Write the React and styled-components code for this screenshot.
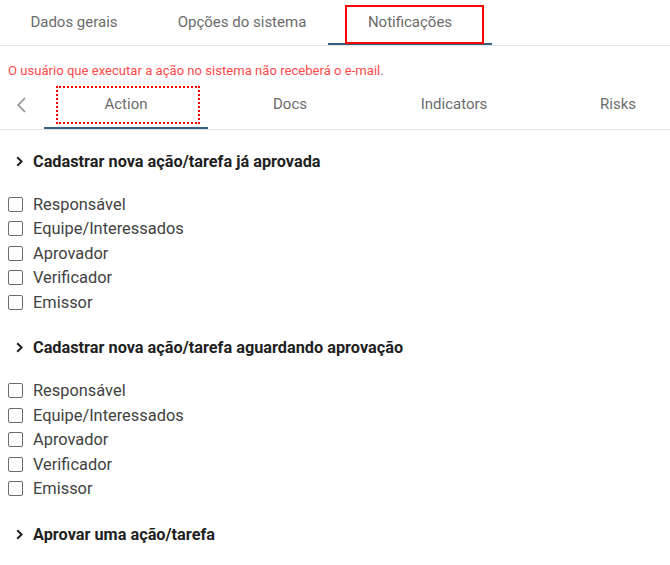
import React from "react";
import styled, { createGlobalStyle } from "styled-components";

const GlobalStyle = createGlobalStyle`
  html, body {
    margin: 0;
    padding: 0;
    background: #fff;
  }
  body {
    font-family: Roboto, "Liberation Sans", Arial, sans-serif;
  }
`;

const Page = styled.div`
  width: 670px;
  height: 565px;
  overflow: hidden;
  background: #fff;
`;

const TopBar = styled.div`
  display: flex;
  gap: 4px;
  margin-left: -8px;
  border-bottom: 1px solid #e3e3e3;
`;

const TopTab = styled.div`
  position: relative;
  width: 164px;
  height: 43px;
  flex-shrink: 0;
  display: flex;
  align-items: center;
  justify-content: center;
  font-size: 15px;
  color: #6b6b6b;
  border-bottom: 2px solid ${(p) => (p.$active ? "#35607f" : "transparent")};
`;

const RedBox = styled.div`
  position: absolute;
  top: 5px;
  left: 17px;
  width: 135px;
  height: 35px;
  border: 2px solid #f00;
`;

const Warning = styled.div`
  padding: 17px 8px 0;
  font-size: 13.1px;
  line-height: 16px;
  color: #ff4a4a;
`;

const SubBar = styled.div`
  display: flex;
  margin-top: 2px;
  border-bottom: 1px solid #e3e3e3;
`;

const Arrow = styled.div`
  width: 44px;
  flex-shrink: 0;
  display: flex;
  align-items: center;
  justify-content: center;
  padding-right: 2px;
  box-sizing: border-box;
`;

const SubTab = styled.div`
  position: relative;
  width: 164px;
  height: 46px;
  flex-shrink: 0;
  display: flex;
  align-items: center;
  justify-content: center;
  font-size: 15px;
  color: #6b6b6b;
  border-bottom: 2px solid ${(p) => (p.$active ? "#35607f" : "transparent")};
`;

const DottedBox = styled.div`
  position: absolute;
  top: 5px;
  left: 12px;
  width: 140px;
  height: 34px;
  border: 2px dotted #f00;
`;

const Content = styled.div`
  padding: 21px 0 0 8px;
`;

const Section = styled.div`
  margin-bottom: 23px;
`;

const Heading = styled.div`
  display: flex;
  align-items: center;
  gap: 10px;
  height: 20px;
  padding-left: 8px;
  font-size: 16.3px;
  font-weight: 700;
  color: #1f1f1f;
`;

const List = styled.div`
  margin-top: 21px;
  display: flex;
  flex-direction: column;
`;

const Row = styled.label`
  display: flex;
  align-items: center;
  gap: 10px;
  height: 24.5px;
  font-size: 16.4px;
  color: #424242;
`;

const Box = styled.span`
  box-sizing: border-box;
  width: 15px;
  height: 15px;
  border: 1.5px solid #6a6a6a;
  border-radius: 2px;
  flex-shrink: 0;
`;

const Chevron = ({ dir = "right" }) =>
  dir === "right" ? (
    <svg width="7" height="11" viewBox="0 0 7 11">
      <path d="M1.2 1.2 L5.6 5.5 L1.2 9.8" fill="none" stroke="#1f1f1f" strokeWidth="2" />
    </svg>
  ) : (
    <svg width="9" height="16" viewBox="0 0 9 16">
      <path d="M8 1 L1.2 8 L8 15" fill="none" stroke="#8a8a8a" strokeWidth="1.5" />
    </svg>
  );

const roles = ["Responsável", "Equipe/Interessados", "Aprovador", "Verificador", "Emissor"];

const sections = [
  { title: "Cadastrar nova ação/tarefa já aprovada", open: true },
  { title: "Cadastrar nova ação/tarefa aguardando aprovação", open: true },
  { title: "Aprovar uma ação/tarefa", open: false },
];

export default function App() {
  return (
    <Page>
      <GlobalStyle />
      <TopBar>
        <TopTab>Dados gerais</TopTab>
        <TopTab>Opções do sistema</TopTab>
        <TopTab $active>
          Notificações
          <RedBox />
        </TopTab>
      </TopBar>

      <Warning>O usuário que executar a ação no sistema não receberá o e-mail.</Warning>

      <SubBar>
        <Arrow>
          <Chevron dir="left" />
        </Arrow>
        <SubTab $active>
          Action
          <DottedBox />
        </SubTab>
        <SubTab>Docs</SubTab>
        <SubTab>Indicators</SubTab>
        <SubTab>Risks</SubTab>
      </SubBar>

      <Content>
        {sections.map((s) => (
          <Section key={s.title}>
            <Heading>
              <Chevron />
              {s.title}
            </Heading>
            {s.open && (
              <List>
                {roles.map((r) => (
                  <Row key={r}>
                    <Box />
                    {r}
                  </Row>
                ))}
              </List>
            )}
          </Section>
        ))}
      </Content>
    </Page>
  );
}
